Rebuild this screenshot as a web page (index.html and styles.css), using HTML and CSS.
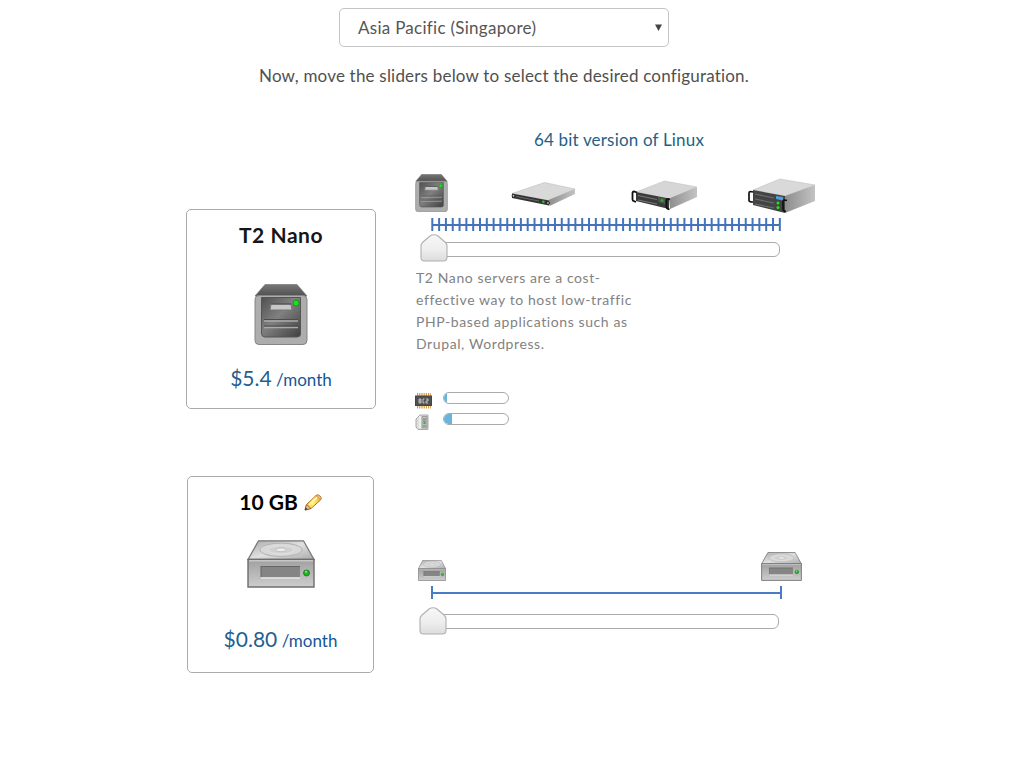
FILE: index.html
```html
<!DOCTYPE html>
<html lang="en">
<head>
<meta charset="utf-8">
<title>Server configuration</title>
<link rel="stylesheet" href="styles.css">
</head>
<body>
<svg class="defs" width="0" height="0" aria-hidden="true">
  <defs>
    <linearGradient id="top" x2="0" y2="1"><stop stop-color="#777"/><stop offset="1" stop-color="#505050"/></linearGradient>
    <linearGradient id="face" x2="1" y2="1"><stop stop-color="#505050"/><stop offset=".45" stop-color="#808080"/><stop offset="1" stop-color="#404040"/></linearGradient>
    <linearGradient id="silver" x2="1" y2="1"><stop stop-color="#aaa"/><stop offset=".5" stop-color="#e0e0e0"/><stop offset="1" stop-color="#aaa"/></linearGradient>
    <linearGradient id="front" x2="0" y2="1"><stop stop-color="#a0a0a0"/><stop offset="1" stop-color="#cdcdcd"/></linearGradient>
    <linearGradient id="side"><stop stop-color="#8d8d8d"/><stop offset="1" stop-color="#c3c3c3"/></linearGradient>
    <linearGradient id="knob" x2="0" y2="1"><stop stop-color="#f7f7f7"/><stop offset=".55" stop-color="#eee"/><stop offset="1" stop-color="#dcdcdc"/></linearGradient>
    <linearGradient id="wood"><stop stop-color="#f2a72c"/><stop offset=".5" stop-color="#fff27a"/><stop offset="1" stop-color="#eeb02c"/></linearGradient>
    <symbol id="tower" viewBox="0 0 54 61">
      <path d="M11 .5H43L53 12H1Z" fill="url(#top)" stroke="#777" stroke-width=".7"/>
      <rect x="1" y="11.500" width="52" height="49" rx="4" fill="#adadad" stroke="#858585"/>
      <path d="M7.500 13.500H46.500V50Q46.500 53 43 53H11Q7.500 53 7.500 49Z" fill="url(#face)" stroke="#555"/>
      <path d="M17 20H37L38 26H16Z" fill="#c8c8c8" stroke="#777"/><path d="M17 20H37" stroke="#444"/>
      <path d="M10 37H44M10 43.500H44" stroke="#aaa" stroke-width="1.500"/><path d="M10 35.500H44M10 42H44" stroke="#4c4c4c"/>
      <circle cx="42" cy="19" r="3" fill="#17e317" stroke="#168216" stroke-width=".7"/>
    </symbol>
    <symbol id="disk" viewBox="0 0 68 48">
      <path d="M11.500 .8H56.500L67 19.500H1Z" fill="url(#silver)" stroke="#777" stroke-width="1.300"/>
      <path d="M1 19.500H67V47H1Z" fill="url(#front)" stroke="#6d6d6d" stroke-width="1.400"/>
      <path d="M2 20.800H66" stroke="#ddd"/>
      <ellipse cx="34" cy="9.800" rx="21" ry="6.700" fill="#d8d8d8" stroke="#b2b2b2"/>
      <ellipse cx="34" cy="9.800" rx="13" ry="4" fill="#d0d0d0" stroke="#e2e2e2"/>
      <ellipse cx="34" cy="9.800" rx="5" ry="1.900" fill="#eee" stroke="#b5b5b5" stroke-width=".7"/>
      <rect x="14" y="26" width="39" height="11.500" fill="#858585"/><path d="M14 26.500H53M14 26V37" stroke="#666"/>
      <path d="M14 38H53" stroke="#e8e8e8" stroke-width="1.500"/>
      <circle cx="59.500" cy="33" r="3" fill="#22b522" stroke="#187218" stroke-width=".8"/><circle cx="59" cy="31.800" r="1" fill="#93ed93"/>
    </symbol>
    <symbol id="handle" viewBox="0 0 28 28">
      <path d="M1 12Q1 10 3 8L10 2Q14 -.5 18 2L25 8Q27 10 27 12V23.500Q27 27 23.500 27H4.500Q1 27 1 23.500Z" fill="url(#knob)" stroke="#b0b0b0" stroke-width="1.100"/>
    </symbol>
  </defs>
</svg>
<main class="page">
  <div class="region">
    <select class="region-select" aria-label="Region"><option>Asia Pacific (Singapore)</option></select>
    <svg class="region-arrow" width="7" height="7" viewBox="0 0 7 7"><path d="M0 .5H7L3.500 7Z" fill="#444"/></svg>
  </div>
  <p class="hint">Now, move the sliders below to select the desired configuration.</p>

  <section class="config server">
    <article class="card server-card">
      <h2 class="card-title">T2 Nano</h2>
      <svg class="card-icon" width="54" height="61"><use href="#tower"/></svg>
      <p class="price"><span class="amount">$5.4</span> <span class="per">/month</span></p>
    </article>
    <div class="controls">
      <h3 class="os">64 bit version of Linux</h3>
      <div class="sizes">
        <svg width="33" height="38" viewBox="0 0 54 61" preserveAspectRatio="none"><use href="#tower" width="54" height="61"/></svg>
        <svg class="size-small" width="65" height="25" viewBox="0 0 65 25">
          <path d="M1 11.500L33.500 .5L64 7L37.500 18.500Z" fill="#d9d9d9" stroke="#c0c0c0" stroke-width=".6"/>
          <path d="M37.500 18L64 7V12L38.500 24Z" fill="url(#side)"/>
          <path d="M1 11.500L38 18.500V23.500L1 16Z" fill="#333"/>
          <path d="M5 14.500L28 19" stroke="#666" stroke-width="1.200"/>
          <circle cx="2.500" cy="13.800" r="1.400" fill="#ccc" stroke="#222"/><circle cx="37" cy="21" r="1.500" fill="#bbb" stroke="#222"/>
          <circle cx="32.300" cy="19.800" r="1.400" fill="#20c020"/>
        </svg>
        <svg class="size-medium" width="67" height="31" viewBox="0 0 67 31">
          <path d="M5 12L33.500 1L66 7L39 19Z" fill="#d6d6d6" stroke="#c1c1c1" stroke-width=".6"/>
          <path d="M38 18.500L66 7V17L39 29Z" fill="url(#side)"/>
          <path d="M5 12L38 18.500V29L5 21Z" fill="#3b3b3b"/>
          <path d="M7 15.500L26 19.500M7 20L26 24" stroke="#777" stroke-width="1.200"/>
          <path d="M27 17L34 18.500V24L27 22Z" fill="#50544f"/><circle cx="31" cy="20.500" r="1.500" fill="#16bb23"/>
          <path d="M6 12.500L3 11.500Q1.500 11.500 1.500 13V19.500Q1.500 21 3 21.200L5 22M39 19.500L37 19Q35.500 19 35.500 20.500V27Q35.500 28.500 38.500 29.500" fill="none" stroke="#111" stroke-width="1.800"/>
        </svg>
        <svg class="size-large" width="69" height="36" viewBox="0 0 69 36">
          <path d="M6 12L33 1L68 7L38 18Z" fill="#d9d9d9" stroke="#c1c1c1" stroke-width=".6"/>
          <path d="M38 18L68 7V23L38 35Z" fill="url(#side)"/>
          <path d="M6 12L38 18V35L6 27Z" fill="#444"/>
          <path d="M8 16L27 20M8 21L27 25M8 26L27 30" stroke="#707070" stroke-width="1.100"/>
          <path d="M29 18L36 19V22.500L29 21Z" fill="#579cdf"/>
          <circle cx="31" cy="25" r="1.500" fill="#20e420"/><circle cx="31" cy="29.500" r="1.500" fill="#20e420"/>
          <path d="M6 14L3.500 13.500Q2 13.500 2 15V22.500Q2 24 6 24M40 22.500L37.500 22Q36 22 36 23.500V31Q36 33 39 33.500" fill="none" stroke="#111" stroke-width="1.700"/>
        </svg>
      </div>
      <svg class="ruler" width="350" height="14" viewBox="0 0 350 14">
        <path d="M1 7H349" stroke="#4473ba" stroke-width="2"/>
        <path d="M.3 6.500H350" stroke="#4473ba" stroke-width="13" stroke-dasharray="2 4.814"/>
      </svg>
      <div class="slider"><div class="track"></div><svg class="handle" width="28" height="28"><use href="#handle"/></svg></div>
      <p class="description">T2 Nano servers are a cost-<br>effective way to host low-traffic<br>PHP-based applications such as<br>Drupal, Wordpress.</p>
      <div class="meters">
        <div class="meter-row">
          <svg class="chip" width="17" height="16" viewBox="0 0 17 16"><path d="M2 1.500H16M2 14H16" stroke="#d59b44" stroke-width="3" stroke-dasharray="1.200 1"/><rect x=".5" y="3" width="16" height="9.500" fill="#505050" stroke="#444"/><path d="M4 6V10M4 6H6V10H4M4 8H6M9.500 6H8V10H9.500M11 6H13V8H11V10H13" fill="none" stroke="#ddd" stroke-width=".8"/></svg>
          <div class="meter"><div class="meter-fill" style="width:4%"></div></div>
        </div>
        <div class="meter-row">
          <svg class="memory" width="17" height="17" viewBox="0 0 17 17"><path d="M5 1H13V15.500H3L1 13V5Z" fill="#ddd" stroke="#aaa"/><path d="M7 2.500H12V14H7Z" fill="#c2c2c2" stroke="#888" stroke-width=".7"/><path d="M8 5H11M8 7H11M8 12H11" stroke="#777"/><path d="M5 2V14" stroke="#fff"/><circle cx="9.500" cy="9" r="1.200" fill="#22b94a"/></svg>
          <div class="meter"><div class="meter-fill" style="width:12%"></div></div>
        </div>
      </div>
    </div>
  </section>

  <section class="config storage">
    <article class="card storage-card">
      <h2 class="card-title">10 GB <svg class="pencil" width="18" height="17" viewBox="0 0 18 17"><path d="M1 16L2.500 10.500L12 1.500Q14 0 16 2Q18 4 16.500 6L7 14.500Z" fill="url(#wood)" stroke="#b87526"/><path d="M1 16L2.500 10.500L7 14.500Z" fill="#edbd83" stroke="#94511e" stroke-width=".7"/><path d="M1 16L1.700 13.500L3.500 15.200Z" fill="#333"/><path d="M12 1.500Q14 0 16 2Q18 4 16.500 6Z" fill="#f5b6a0" stroke="#b87526" stroke-width=".6"/><path d="M5 11L13 3.500" stroke="#fffbb5" stroke-width="1.500"/></svg></h2>
      <svg class="card-icon" width="68" height="48"><use href="#disk"/></svg>
      <p class="price"><span class="amount">$0.80</span> <span class="per">/month</span></p>
    </article>
    <div class="controls">
      <div class="disks">
        <svg width="28" height="21" viewBox="0 0 68 48" preserveAspectRatio="none"><use href="#disk" width="68" height="48"/></svg>
        <svg width="41" height="29" viewBox="0 0 68 48" preserveAspectRatio="none"><use href="#disk" width="68" height="48"/></svg>
      </div>
      <svg class="ruler" width="351" height="14" viewBox="0 0 351 14"><path d="M1 7H350M1 0V13M350 0V13" fill="none" stroke="#4a7bc5" stroke-width="2"/></svg>
      <div class="slider"><div class="track"></div><svg class="handle" width="28" height="28"><use href="#handle"/></svg></div>
    </div>
  </section>
</main>
</body>
</html>
```

FILE: styles.css
```css
* { box-sizing: border-box; }
body { margin: 0; background: #fff; color: #505050; font: 17px/24px Lato, sans-serif; font-variant-ligatures: none; }
.defs { display: block; height: 0; }
h2, h3, p { margin: 0; }
svg { display: block; flex: none; }
.page { width: 1024px; height: 768px; padding: 8px 0 0 186px; overflow: hidden; }
.region { position: relative; width: 330px; height: 39px; margin-left: 153px; }
.region-select { appearance: none; width: 330px; height: 39px; padding: 0 18px; border: 1px solid #c5c5c5; border-radius: 5px; background: #fff; color: #555; font: 17px Lato, sans-serif; letter-spacing: .28px; }
.region-arrow { position: absolute; right: 7px; top: 16px; }
.hint { width: 636px; padding-top: 17px; text-align: center; font-size: 17px; letter-spacing: .2px; }
.config { display: grid; grid-template-columns: 190px 410px; column-gap: 39px; align-items: start; }
.server { margin-top: 40px; height: 304px; }
.card { display: flex; flex-direction: column; align-items: center; border: 1px solid #aaa; border-radius: 5px; background: #fff; }
.server-card { width: 190px; height: 200px; margin-top: 81px; }
.card-title { display: flex; gap: 6px; align-items: center; margin-top: 11px; height: 28px; color: #161616; font: 700 21px/28px Lato, sans-serif; }
.server-card .card-title { letter-spacing: .55px; }
.server-card .card-icon { margin-top: 35px; }
.price { color: #255f91; height: 28px; line-height: 28px; white-space: nowrap; }
.server-card .price { margin-top: 19px; }
.amount { font-size: 21px; }
.per { font-size: 17px; color: #155698; }
.os { width: 408px; color: #255f86; text-align: center; font: 17px/24px Lato, sans-serif; letter-spacing: .18px; }
.sizes { display: flex; height: 44px; margin-top: 22px; align-items: flex-start; }
.size-small { margin: 8px 0 0 63px; }
.size-medium { margin: 6px 0 0 55px; }
.size-large { margin: 4px 0 0 49px; }
.ruler { margin-left: 16px; }
.slider { position: relative; height: 28px; margin-top: 2px; padding: 8px 0 0 14px; }
.track { width: 351px; height: 15px; border: 1px solid #aaa; border-radius: 6px; }
.handle { position: absolute; left: 5px; top: 0; }
.description { margin-top: 5px; padding-left: 1px; color: #828282; font-size: 14px; line-height: 22px; letter-spacing: .6px; }
.meters { display: grid; row-gap: 4px; margin-top: 37px; }
.meter-row { display: flex; gap: 11px; height: 17px; }
.chip, .memory { margin-top: 1px; }
.meter { width: 66px; height: 12px; border: 1px solid #aaa; border-radius: 6px; overflow: hidden; }
.meter-fill { height: 100%; background: #69b4d8; }
.storage { margin-top: 44px; }
.storage-card { width: 187px; height: 197px; margin: 0 0 0 1px; }
.storage-card .card-title { color: #000; }
.storage-card .card-icon { margin-top: 24px; }
.storage-card .price { margin-top: 37px; }
.disks { display: flex; width: 387px; margin-top: 76px; padding-left: 3px; justify-content: space-between; align-items: flex-end; }
.storage .ruler { margin-top: 5px; }
.storage .slider { margin-top: 7px; padding-top: 7px; }
.storage .track { width: 350px; }
.storage .handle { left: 4px; }
```
